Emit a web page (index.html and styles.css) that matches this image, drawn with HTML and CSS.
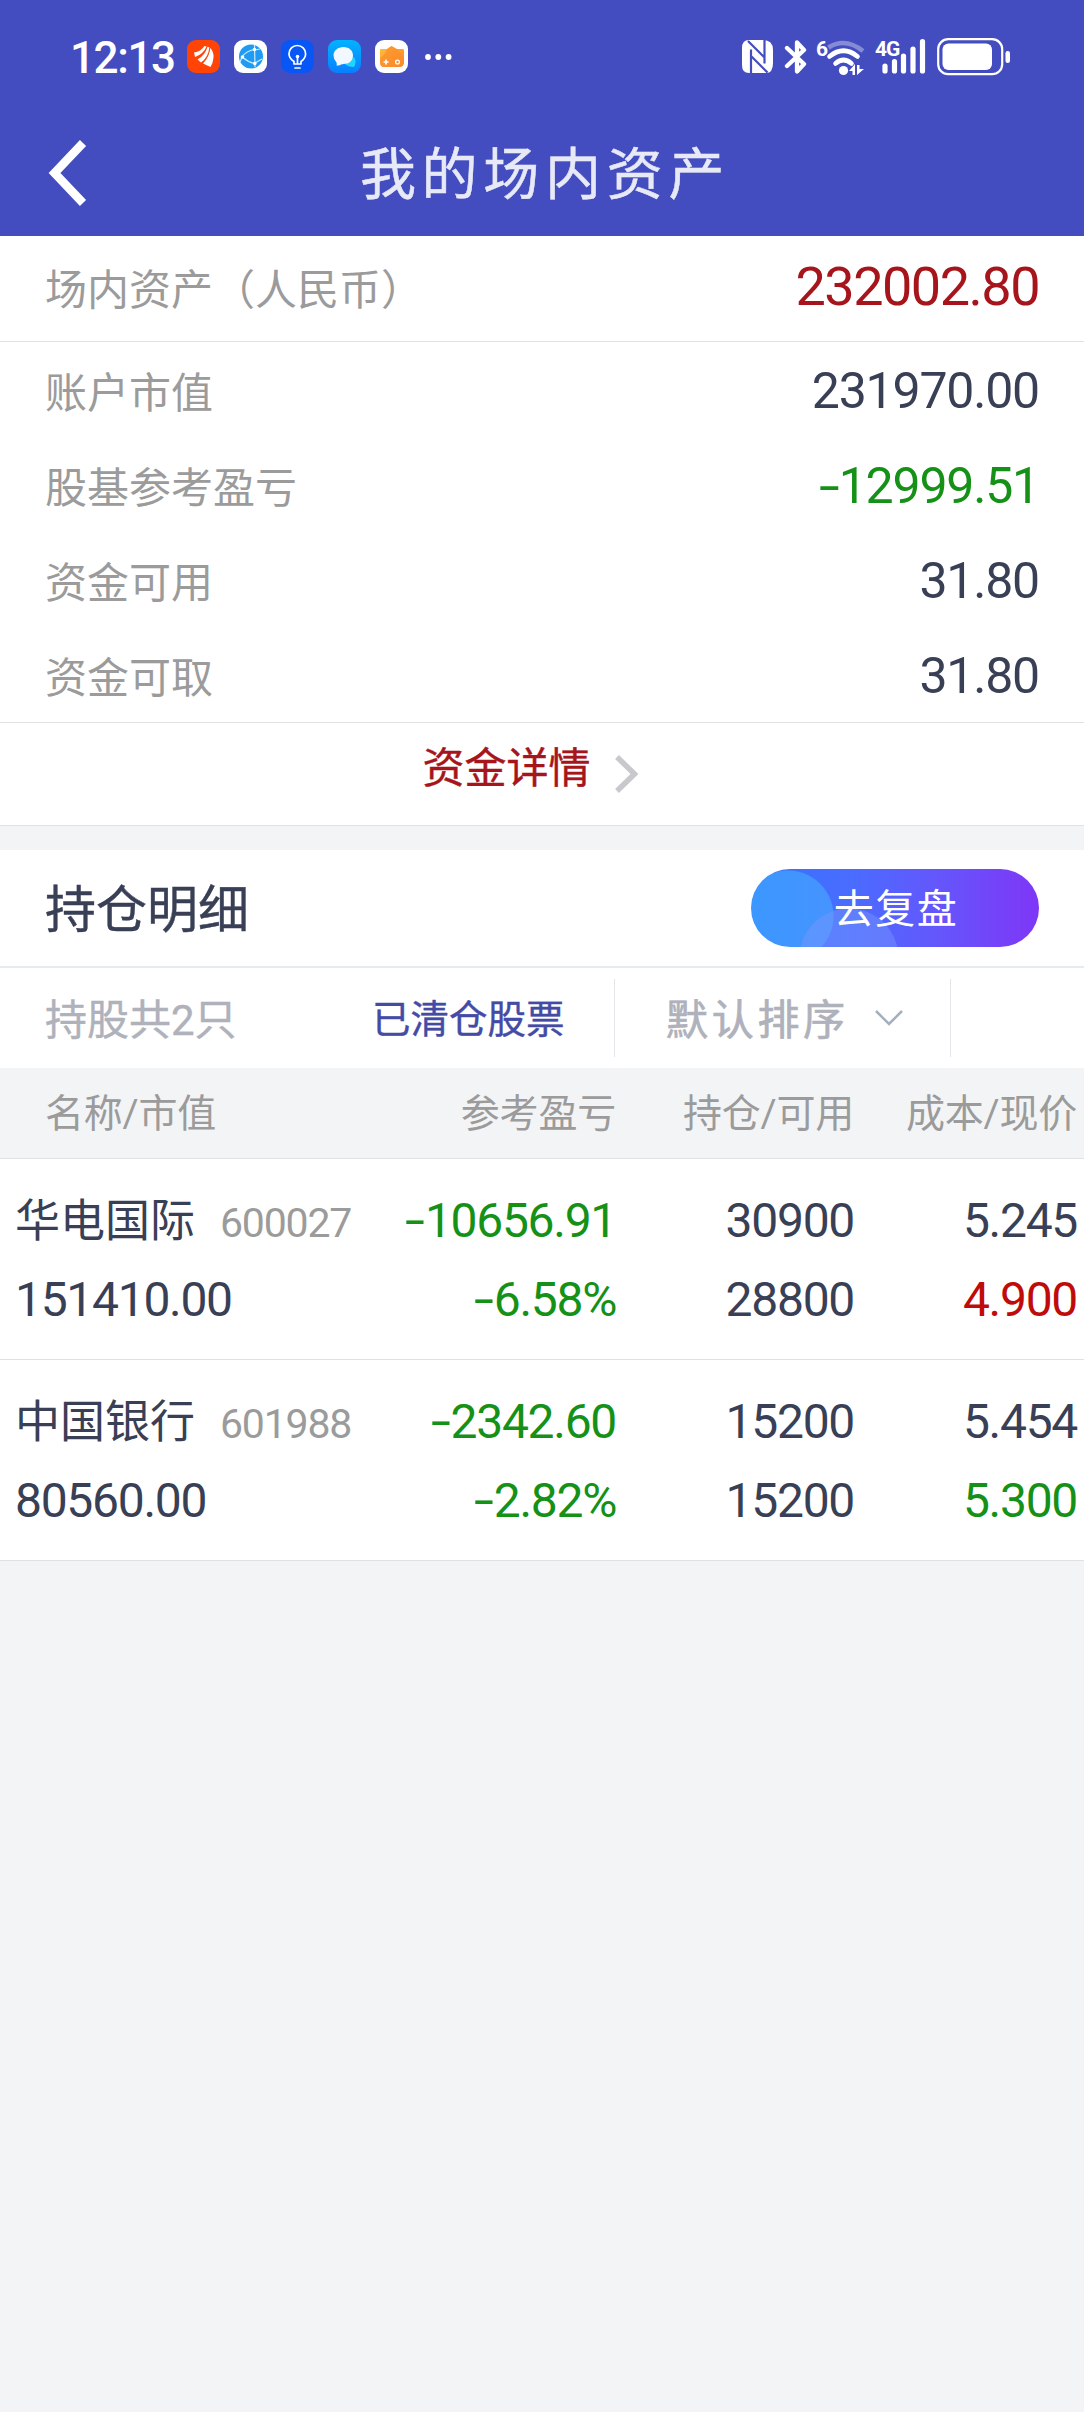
FILE: index.html
```html
<!DOCTYPE html>
<html lang="zh-CN">
<head>
  <meta charset="UTF-8" />
  <meta name="viewport" content="width=device-width, initial-scale=1.0"/>
  <title>我的场内资产</title>
  <link rel="stylesheet" href="styles.css">
</head>
<body>

<header class="top">
  <div class="statusbar">
    <span class="time">12:13</span>
    <div class="apps">
      <svg width="33" height="33" viewBox="0 0 33 33">
        <rect width="33" height="33" rx="9" fill="#ff4405"/>
        <path d="M7 12.500Q14 11.500 17.500 6L19.500 6.500Q16.500 14 8 17Z" fill="#fff"/>
        <path d="M10.500 19.500Q18 15.500 20.500 6.800L22.300 7.500Q21.500 17 14 22.500Z" fill="#fff"/>
        <path d="M16 23.500Q22.500 17 23.300 8Q27 12 26.500 17.500Q26 23 23.500 27Z" fill="#fff"/>
      </svg>
      <svg width="33" height="33" viewBox="0 0 33 33">
        <rect width="33" height="33" rx="9" fill="#fff"/>
        <circle cx="17" cy="16.500" r="12" fill="#209bf3"/>
        <g fill="none" stroke="#c9ecff" stroke-width="1.200">
          <path d="M20.500 5L21 27M20.500 9.500Q12 11 8 17Q14 22 20.500 23.500M8 17L6 22M21 10L26 9M21 23L28 19"/>
        </g>
        <circle cx="20.500" cy="9.500" r="1.800" fill="#fff"/>
        <circle cx="8.500" cy="17" r="1.800" fill="#fff"/>
        <circle cx="20.800" cy="23.500" r="1.800" fill="#fff"/>
      </svg>
      <svg width="33" height="33" viewBox="0 0 33 33">
        <rect width="33" height="33" rx="9" fill="#0756f5"/>
        <g fill="none" stroke="#fff" stroke-width="1.700" stroke-linecap="round" stroke-linejoin="round">
          <path d="M13 24V21.500Q8 18.500 8 13.800A8.300 8.300 0 0 1 24.600 13.800Q24.600 18.500 20 21.500V24ZM14 28H19M16.500 17V23"/>
        </g>
        <circle cx="16.500" cy="16.500" r="1.800" fill="#fff"/>
      </svg>
      <svg width="33" height="33" viewBox="0 0 33 33">
        <defs>
          <linearGradient id="chat" x1="0" y1="0" x2="0" y2="1">
            <stop offset="0" stop-color="#03b2ff"/>
            <stop offset="1" stop-color="#087fff"/>
          </linearGradient>
        </defs>
        <rect width="33" height="33" rx="9" fill="url(#chat)"/>
        <path d="M26 17Q29 22 26 27Q20 27 17 24Z" fill="#20d5fa"/>
        <path d="M15.500 7C21 7 25 10.500 25 15.500S21 24 15.500 24Q13 24 11 25.500H8.500Q9 24 8.500 22.500Q5.500 19.500 5.500 15.500C5.500 10.500 10 7 15.500 7Z" fill="#f1f8ff"/>
      </svg>
      <svg width="33" height="33" viewBox="0 0 33 33">
        <defs>
          <linearGradient id="game" x1="0" y1="0" x2="1" y2="1">
            <stop offset="0" stop-color="#ffc13b"/>
            <stop offset="1" stop-color="#ff8124"/>
          </linearGradient>
        </defs>
        <rect width="33" height="33" rx="9" fill="#fff"/>
        <path d="M5 9H12L16.500 6L22 9H28Q29 9 29 11V22Q29 27 24 27H9Q5 27 5 22Z" fill="url(#game)"/>
        <path d="M5 18Q10 15 12 9L16.500 6Q20 8 23 10Q26 13 29 17V22Q29 27 24 27H9Q5 27 5 22Z" fill="#fb8d2c" opacity=".7"/>
        <path d="M11 19.500V24.500M8.500 22H13.500" stroke="#fff" stroke-width="1.700"/>
        <circle cx="22.500" cy="22" r="1.900" fill="none" stroke="#fff" stroke-width="1.300"/>
      </svg>
    </div>
    <svg class="more" width="28" height="8" viewBox="0 0 28 8" fill="#fff">
      <circle cx="4" cy="4" r="2.900"/><circle cx="14.300" cy="4" r="2.900"/><circle cx="24.600" cy="4" r="2.900"/>
    </svg>

    <div class="signals">
      <svg width="31" height="33" viewBox="0 0 31 33">
        <path d="M7 0H21Q31 0 31 10V23Q31 33 24 33H7Q0 33 0 25V8Q0 0 7 0Z" fill="#fff"/>
        <g fill="none" stroke="#444dbf" stroke-width="2.200">
          <path d="M9 33V9.500M22.500 0V23.500M6 1L22.500 17.500M9 16L25.500 32.500"/>
        </g>
      </svg>
      <svg class="bt" width="24" height="36" viewBox="0 0 24 36">
        <path d="M3 9L20 25L13 32.500V3.500L20 11L3 27" fill="none" stroke="#fff" stroke-width="4.300" stroke-linecap="round" stroke-linejoin="round"/>
      </svg>
      <svg class="wifi" width="52" height="40" viewBox="-2 -2 52 40">
        <text x="0" y="16.500" class="tag">6</text>
        <g fill="none" stroke="#fff" stroke-width="4.600">
          <path d="M12.500 8.500Q29 -2 47 12" opacity=".35"/>
          <path d="M13.500 17.500Q27.500 6 41.500 17.500" stroke-linecap="round"/>
          <path d="M19.500 24.500Q27.500 17.500 35.500 24.500" stroke-linecap="round"/>
        </g>
        <circle cx="27.500" cy="31.500" r="4.600" fill="#fff"/>
        <path d="M33 32L39 25V36H36.500V32ZM41 26H43.500V30H48L41 36Z" fill="#fff"/>
      </svg>
      <svg class="cell" width="51" height="38" viewBox="0 0 51 38">
        <text x="0" y="18" class="tag">4G</text>
        <path d="M10 28V33M19.500 23.500V33M28.500 18V33M38 11V33M47.500 3.500V33" fill="none" stroke="#fff" stroke-width="5.200" stroke-linecap="round"/>
      </svg>
      <svg class="battery" width="74" height="38" viewBox="0 0 74 38">
        <rect x="1.200" y="1.200" width="64" height="35" rx="10" fill="none" stroke="#fff" stroke-width="2.200"/>
        <rect x="5.500" y="5.500" width="49.500" height="26.500" rx="6" fill="#fff"/>
        <rect x="68.500" y="13" width="4.500" height="12" rx="2.200" fill="#fff"/>
      </svg>
    </div>
  </div>

  <div class="navbar">
    <svg class="back" width="40" height="66" viewBox="0 0 40 66">
      <path d="M36 3L7.500 33L36 63" fill="none" stroke="#fff" stroke-width="8.500"/>
    </svg>
    <h1>我的场内资产</h1>
  </div>
</header>

<section class="assets">
  <div class="row total"><span>场内资产（人民币）</span><b>232002.80</b></div>
  <div class="list">
    <div class="row"><span>账户市值</span><b>231970.00</b></div>
    <div class="row"><span>股基参考盈亏</span><b class="green"><i>-</i>12999.51</b></div>
    <div class="row"><span>资金可用</span><b>31.80</b></div>
    <div class="row"><span>资金可取</span><b>31.80</b></div>
  </div>
  <a class="detail">
    资金详情
    <svg width="26" height="40" viewBox="0 0 26 40">
      <path d="M3 3L20.500 20L3 37" fill="none" stroke="#c8c8cd" stroke-width="5.500"/>
    </svg>
  </a>
</section>

<section class="positions">
  <div class="heading">
    <h2>持仓明细</h2>
    <button class="review">去复盘</button>
  </div>

  <div class="filters">
    <span class="count">持股共2只</span>
    <a class="cleared">已清仓股票</a>
    <div class="sort">
      <span>默认排序</span>
      <svg width="30" height="18" viewBox="0 0 30 18">
        <path d="M2 2L15 15L28 2" fill="none" stroke="#a4b0bf" stroke-width="2.500"/>
      </svg>
    </div>
  </div>

  <div class="grid thead">
    <span>名称/市值</span><span>参考盈亏</span><span>持仓/可用</span><span>成本/现价</span>
  </div>

  <div class="grid stock">
    <div><p class="name">华电国际<small>600027</small></p><p>151410.00</p></div>
    <div class="green"><p><i>-</i>10656.91</p><p><i>-</i>6.58%</p></div>
    <div><p>30900</p><p>28800</p></div>
    <div><p>5.245</p><p class="red">4.900</p></div>
  </div>
  <div class="grid stock">
    <div><p class="name">中国银行<small>601988</small></p><p>80560.00</p></div>
    <div class="green"><p><i>-</i>2342.60</p><p><i>-</i>2.82%</p></div>
    <div><p>15200</p><p>15200</p></div>
    <div><p>5.454</p><p class="green">5.300</p></div>
  </div>
</section>

</body>
</html>
```
FILE: styles.css
```css
:root {
  --blue: #444dbf;
  --text: #393f55;
  --gray: #9b9b9b;
  --line: #e1e1e3;
  --bg: #f3f4f6;
  --green: #159117;
}

* {
  box-sizing: border-box;
}

body {
  margin: 0;
  background: var(--bg);
  color: var(--text);
  font-family: Roboto, "Noto Sans CJK SC", sans-serif;
}

h1, h2, p {
  margin: 0;
  font-weight: 400;
}

svg {
  display: block;
  flex: none;
}

/* wide minus sign in front of losses */
i {
  display: inline-block;
  width: 20px;
  font-style: normal;
  text-align: left;
  transform: scaleX(1.5);
  transform-origin: 0 50%;
}

/* header */
.top {
  height: 236px;
  background: var(--blue);
  color: #fff;
}

.statusbar {
  display: flex;
  align-items: center;
  height: 113px;
  padding-left: 70px;
}

.time {
  width: 117px;
  padding-top: 2px;
  font-size: 44px;
  font-weight: 500;
  letter-spacing: -1.4px;
  line-height: 50px;
}

.apps {
  display: flex;
  gap: 14px;
}

.more {
  margin-left: 16px;
}

.signals {
  display: flex;
  align-items: center;
  margin-left: auto;
  margin-right: 73px;
}

.bt { margin-left: 11px; }
.wifi { margin-left: 6px; }
.cell { margin-left: 9px; }
.battery { margin-left: 11px; }

.tag {
  fill: #fff;
  font-size: 21px;
  font-weight: 700;
  letter-spacing: -1px;
}

.navbar {
  position: relative;
  height: 122px;
}

.back {
  position: absolute;
  left: 47px;
  top: 27px;
}

h1 {
  padding-left: 6px;
  text-align: center;
  font-size: 56px;
  letter-spacing: 5.7px;
  line-height: 124px;
  opacity: .88;
  -webkit-text-stroke: .5px;
}

/* assets */
.assets {
  background: #fff;
  border-bottom: 1px solid var(--line);
}

.row {
  display: flex;
  justify-content: space-between;
  align-items: center;
  height: 95px;
  padding: 0 45px;
  color: var(--gray);
  font-size: 42px;
}

.row b {
  padding-top: 3px;
  color: var(--text);
  font-size: 50px;
  font-weight: 400;
  letter-spacing: -1.2px;
}

.row.total {
  height: 106px;
  padding-bottom: 4px;
  border-bottom: 1px solid var(--line);
}

.row.total b {
  padding-top: 0;
  color: #a5151b;
  font-size: 54px;
  letter-spacing: -1.5px;
}

.list {
  border-bottom: 1px solid var(--line);
}

.row .green, .green {
  color: var(--green);
}

.red {
  color: #c00b0b;
}

.detail {
  display: flex;
  justify-content: center;
  height: 102px;
  padding-right: 22px;
  color: #a5151b;
  font-size: 42px;
  line-height: 91px;
  -webkit-text-stroke: .4px;
}

.detail svg {
  margin: 31px 0 0 23px;
}

/* positions */
.positions {
  margin-top: 24px;
  background: #fff;
}

.heading {
  display: flex;
  justify-content: space-between;
  align-items: center;
  height: 118px;
  padding: 0 45px;
  border-bottom: 2px solid #e6ebef;
}

h2 {
  padding-top: 5px;
  font-size: 51px;
  line-height: 76px;
  -webkit-text-stroke: .4px;
}

.review {
  width: 288px;
  height: 78px;
  padding: 0 0 4px 2px;
  border: none;
  border-radius: 39px;
  background:
    radial-gradient(circle at 98px 89px, rgba(120, 150, 255, .45) 49px, transparent 50px),
    radial-gradient(circle at 37px 47px, rgba(70, 185, 255, .5) 45px, transparent 46px),
    linear-gradient(90deg, #3274ff, #4a6cff 35%, #6456fb 65%, #7f36f7);
  color: #fff;
  font: 40px "Noto Sans CJK SC", sans-serif;
  letter-spacing: 1.5px;
}

.filters {
  display: flex;
  align-items: center;
  height: 100px;
  padding-left: 45px;
  color: #afb1bb;
  font-size: 42px;
  -webkit-text-stroke: .4px;
}

.count {
  width: 327px;
  padding-bottom: 4px;
}

.cleared {
  width: 242px;
  padding-bottom: 4px;
  color: #444ba5;
  font-size: 38.5px;
}

.sort {
  display: flex;
  align-items: center;
  gap: 25px;
  width: 337px;
  height: 78px;
  padding-left: 51px;
  border: solid #e4e6ea;
  border-width: 0 1px;
  letter-spacing: 3.7px;
}

.sort span {
  padding-bottom: 4px;
  -webkit-text-stroke: .7px;
}

/* table */
.grid {
  display: grid;
  grid-template-columns: 360px 256px 238px 223px;
  border-bottom: 1px solid var(--line);
  text-align: right;
}

.grid > :first-child {
  text-align: left;
}

.thead {
  height: 91px;
  background: var(--bg);
  color: var(--gray);
  font-size: 39px;
  letter-spacing: -.2px;
  line-height: 93px;
}

.thead > :first-child {
  padding-left: 45px;
}

.stock {
  height: 201px;
  padding-top: 22px;
  font-size: 48px;
  letter-spacing: -1.3px;
  line-height: 79px;
}

.stock > :first-child {
  padding-left: 15px;
}

.stock p {
  height: 79px;
}

.stock .name {
  font-size: 45px;
  letter-spacing: 0;
  line-height: 81px;
}

.name small {
  margin-left: 25px;
  color: var(--gray);
  font-size: 41px;
  letter-spacing: -1.2px;
}
```
